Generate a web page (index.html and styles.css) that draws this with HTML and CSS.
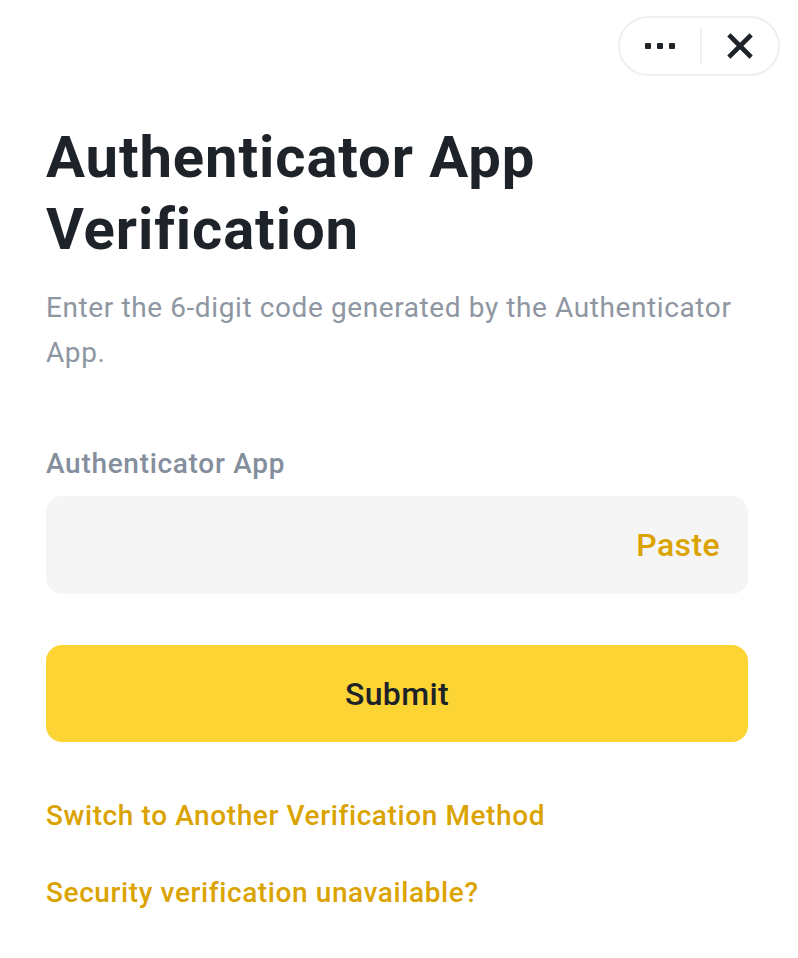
FILE: index.html
```html
<!DOCTYPE html>
<html lang="en">
<head>
<meta charset="utf-8">
<title>Authenticator App Verification</title>
<link rel="stylesheet" href="styles.css">
</head>
<body>
<div class="page">
  <div class="topbar">
    <div class="pill">
      <button class="pill-btn more" aria-label="More">
        <svg width="30" height="8" viewBox="0 0 30 8"><rect x="0" y="1" width="6" height="6" rx="1"/><rect x="12" y="1" width="6" height="6" rx="1"/><rect x="24" y="1" width="6" height="6" rx="1"/></svg>
      </button>
      <span class="divider"></span>
      <button class="pill-btn close" aria-label="Close">
        <svg width="26" height="26" viewBox="0 0 26 26"><path d="M3.5 3.5 L22.5 22.5 M22.5 3.5 L3.5 22.5" stroke="#1E2329" stroke-width="4.6" stroke-linecap="square" fill="none"/></svg>
      </button>
    </div>
  </div>
  <h1 class="title">Authenticator App Verification</h1>
  <p class="desc">Enter the 6-digit code generated by the Authenticator App.</p>
  <label class="label">Authenticator App</label>
  <div class="field">
    <span class="paste">Paste</span>
  </div>
  <button class="submit">Submit</button>
  <a class="link first">Switch to Another Verification Method</a>
  <a class="link">Security verification unavailable?</a>
</div>
</body>
</html>
```
FILE: styles.css
```css
* { box-sizing: border-box; }
html, body { margin: 0; padding: 0; background: #fff; }
body { font-family: Roboto, "Noto Sans", sans-serif; color: #1E2329; }
.page {
  width: 798px;
  padding: 16px 50px 0 46px;
  display: flex;
  flex-direction: column;
}
.topbar {
  display: flex;
  justify-content: flex-end;
  margin-right: -32px;
}
.pill {
  width: 162px;
  height: 60px;
  border: 2px solid #EEEFF1;
  border-radius: 30px;
  display: flex;
  align-items: center;
}
.pill-btn {
  border: 0;
  background: none;
  padding: 0;
  display: flex;
  align-items: center;
  justify-content: center;
  height: 100%;
}
.more { width: 80px; }
.more svg { fill: #1E2329; }
.divider { width: 2px; height: 36px; background: #EEEFF1; }
.close { flex: 1; }
.title {
  margin: 45px 0 0;
  font-size: 58px;
  line-height: 72px;
  font-weight: 700;
  letter-spacing: 0.9px;
  color: #1E2329;
  width: 580px;
}
.desc {
  margin: 20px 0 0;
  font-size: 28px;
  line-height: 45px;
  letter-spacing: 0.6px;
  color: #8E96A2;
  font-weight: 400;
}
.label {
  margin-top: 69px;
  font-size: 28px;
  line-height: 40px;
  letter-spacing: 0.7px;
  color: #848E9C;
  font-weight: 500;
}
.field {
  margin-top: 12px;
  height: 98px;
  background: #F5F5F5;
  border-radius: 16px;
  display: flex;
  align-items: center;
  justify-content: flex-end;
  padding-right: 28px;
}
.paste {
  font-size: 32px;
  letter-spacing: 0.4px;
  color: #DBA300;
  font-weight: 500;
}
.submit {
  margin-top: 51px;
  height: 97px;
  border: 0;
  border-radius: 16px;
  background: #FCD535;
  font-family: inherit;
  font-size: 32px;
  letter-spacing: 0.4px;
  font-weight: 500;
  color: #1E2329;
}
.link {
  font-size: 28px;
  line-height: 40px;
  letter-spacing: 0.6px;
  color: #DBA300;
  font-weight: 500;
  margin-top: 37px;
}
.link.first { margin-top: 54px; }
```
